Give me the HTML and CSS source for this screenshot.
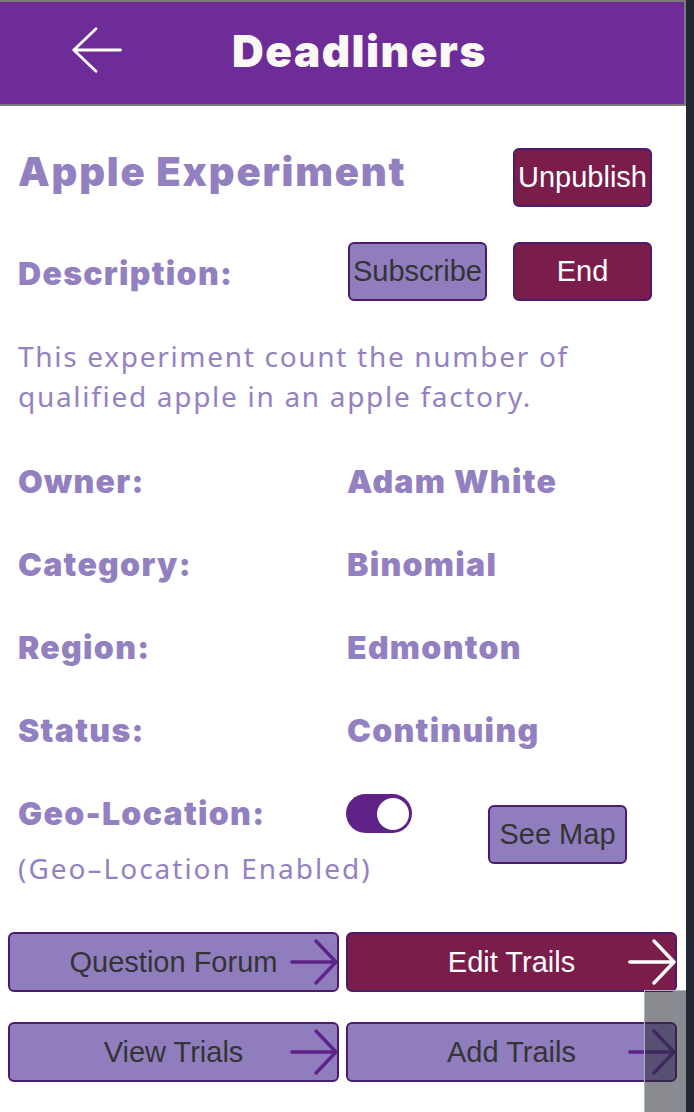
FILE: index.html
```html
<!DOCTYPE html>
<html lang="en">
<head>
<meta charset="utf-8">
<title>Deadliners</title>
<link rel="stylesheet" href="styles.css">
</head>
<body>
<div class="app">
  <header class="topbar">
    <svg class="back" width="50" height="46" viewBox="0 0 50 46" aria-hidden="true">
      <path d="M48.5 23H1.8M24 1.8L1.8 23L24 44.2" fill="none" stroke="#ffffff" stroke-width="2.8" stroke-linecap="round" stroke-linejoin="round"/>
    </svg>
    <h1 class="brand">Deadliners</h1>
  </header>

  <main class="details">
    <div class="row-title">
      <h2 class="exp-title">Apple Experiment</h2>
      <button class="btn btn-maroon">Unpublish</button>
    </div>

    <div class="row-desc">
      <span class="heavy desc-label">Description:</span>
      <div class="btn-group">
        <button class="btn btn-lilac">Subscribe</button>
        <button class="btn btn-maroon">End</button>
      </div>
    </div>

    <p class="desc">This experiment count the number of qualified apple in an apple factory.</p>

    <dl class="info">
      <div class="info-row"><dt class="heavy">Owner:</dt><dd class="heavy">Adam White</dd></div>
      <div class="info-row"><dt class="heavy">Category:</dt><dd class="heavy">Binomial</dd></div>
      <div class="info-row"><dt class="heavy">Region:</dt><dd class="heavy">Edmonton</dd></div>
      <div class="info-row"><dt class="heavy">Status:</dt><dd class="heavy">Continuing</dd></div>
    </dl>

    <div class="geo">
      <div class="geo-text">
        <span class="heavy">Geo-Location:</span>
        <span class="geo-note">(Geo–Location Enabled)</span>
      </div>
      <span class="toggle"><span class="knob"></span></span>
      <button class="btn btn-lilac map-btn">See Map</button>
    </div>
  </main>

  <nav class="actions">
    <button class="action action-lilac"><span class="action-text">Question Forum</span>
      <svg class="arrow" width="48" height="46" viewBox="0 0 48 46" aria-hidden="true"><path d="M1.8 23H46M26 2L46 23L26 44" fill="none" stroke="#5e2389" stroke-width="3.4" stroke-linecap="round" stroke-linejoin="round"/></svg>
    </button>
    <button class="action action-maroon"><span class="action-text">Edit Trails</span>
      <svg class="arrow" width="48" height="46" viewBox="0 0 48 46" aria-hidden="true"><path d="M1.8 23H46M26 2L46 23L26 44" fill="none" stroke="#ffffff" stroke-width="3.4" stroke-linecap="round" stroke-linejoin="round"/></svg>
    </button>
    <button class="action action-lilac"><span class="action-text">View Trials</span>
      <svg class="arrow" width="48" height="46" viewBox="0 0 48 46" aria-hidden="true"><path d="M1.8 23H46M26 2L46 23L26 44" fill="none" stroke="#5e2389" stroke-width="3.4" stroke-linecap="round" stroke-linejoin="round"/></svg>
    </button>
    <button class="action action-lilac"><span class="action-text">Add Trails</span>
      <svg class="arrow" width="48" height="46" viewBox="0 0 48 46" aria-hidden="true"><path d="M1.8 23H46M26 2L46 23L26 44" fill="none" stroke="#5e2389" stroke-width="3.4" stroke-linecap="round" stroke-linejoin="round"/></svg>
    </button>
  </nav>

  <div class="scroll-thumb"></div>
</div>
</body>
</html>
```

FILE: styles.css
```css
* { box-sizing: border-box; }

html, body {
  margin: 0;
  padding: 0;
}

body {
  background: #212733;
  font-family: "Liberation Sans", Arial, sans-serif;
}

.app {
  position: relative;
  width: 686px;
  height: 1112px;
  background: #ffffff;
  overflow: hidden;
}

/* ---------- header ---------- */
.topbar {
  display: flex;
  align-items: center;
  height: 106px;
  padding-left: 72px;
  background: #6d2c98;
  border-top: 2px solid #7b7b7b;
  border-right: 2px solid #7b7b7b;
  border-bottom: 2px solid #7b7b7b;
}

.back {
  display: block;
  margin-bottom: 6px;
}

.brand {
  margin: 0 0 4px 110px;
  font-family: "Inter", "Roboto", "Liberation Sans", sans-serif;
  font-weight: 900;
  font-size: 44px;
  line-height: 52px;
  letter-spacing: 1.5px;
  color: #fbf9f7;
}

/* ---------- shared text ---------- */
.heavy {
  font-family: "Inter", "Roboto", "Liberation Sans", sans-serif;
  font-weight: 900;
  font-size: 32px;
  line-height: 40px;
  letter-spacing: 1.3px;
  color: #9380c1;
}

/* ---------- buttons ---------- */
.btn {
  display: flex;
  align-items: center;
  justify-content: center;
  width: 139px;
  height: 59px;
  padding: 0;
  border: 2px solid #4b1b6c;
  border-radius: 6px;
  font-family: "Liberation Sans", Arial, sans-serif;
  font-size: 29px;
  white-space: nowrap;
}

.btn-maroon {
  background: #7a1d4b;
  color: #ffffff;
}

.btn-lilac {
  background: #907dbe;
  color: #343434;
}

/* ---------- details ---------- */
.details {
  padding: 0 34px 0 18px;
}

.row-title {
  display: flex;
  justify-content: space-between;
  align-items: flex-start;
  margin-top: 42px;
}

.exp-title {
  margin: 0;
  font-family: "Inter", "Roboto", "Liberation Sans", sans-serif;
  font-weight: 900;
  font-size: 40px;
  line-height: 48px;
  letter-spacing: 1.8px;
  color: #9380c1;
}

.row-desc {
  display: flex;
  align-items: flex-start;
  margin-top: 35px;
}

.desc-label {
  flex: 1;
  margin-top: 12px;
}

.btn-group {
  display: flex;
  gap: 26px;
}

.desc {
  margin: 35px 0 0 0;
  font-family: "Noto Sans", "Liberation Sans", sans-serif;
  font-size: 28px;
  line-height: 40px;
  letter-spacing: 1.7px;
  color: #9481c2;
}

.info {
  display: flex;
  flex-direction: column;
  gap: 43px;
  margin: 46px 0 0 0;
}

.info-row {
  display: grid;
  grid-template-columns: 329px 1fr;
}

.info-row dt,
.info-row dd {
  margin: 0;
}

/* ---------- geo ---------- */
.geo {
  display: flex;
  align-items: flex-start;
  margin-top: 43px;
}

.geo-text {
  display: flex;
  flex-direction: column;
  width: 328px;
}

.geo-note {
  margin-top: 14px;
  font-family: "Noto Sans", "Liberation Sans", sans-serif;
  font-size: 28px;
  line-height: 40px;
  letter-spacing: 2px;
  white-space: nowrap;
  color: #9481c2;
}

.toggle {
  display: flex;
  justify-content: flex-end;
  align-items: center;
  width: 66px;
  height: 39px;
  margin-top: 0;
  padding-right: 3px;
  border-radius: 20px;
  background: #5f2387;
}

.knob {
  width: 32px;
  height: 32px;
  border-radius: 50%;
  background: #ffffff;
}

.map-btn {
  margin: 11px 0 0 76px;
}

/* ---------- bottom actions ---------- */
.actions {
  display: grid;
  grid-template-columns: 331px 331px;
  column-gap: 7px;
  row-gap: 30px;
  margin: 44px 0 0 8px;
}

.action {
  display: grid;
  grid-template-columns: 1fr auto 1fr;
  align-items: center;
  height: 60px;
  padding: 0;
  border: 2px solid #4b1b6c;
  border-radius: 6px;
  font-family: "Liberation Sans", Arial, sans-serif;
  font-size: 29px;
}

.action-text {
  grid-column: 2;
  white-space: nowrap;
}

.arrow {
  grid-column: 3;
  justify-self: end;
  display: block;
  margin-right: -1px;
}

.action-lilac {
  background: #907dbe;
  color: #343434;
}

.action-maroon {
  background: #7a1d4b;
  color: #ffffff;
}

/* overlay at the bottom-right edge (floating handle over content) */
.scroll-thumb {
  position: absolute;
  right: 0;
  bottom: 0;
  width: 42px;
  height: 122px;
  background: rgba(40, 44, 52, 0.55);
  border-top: 1px solid #a9b3c6;
  border-left: 1px solid #a9b3c6;
}
```
